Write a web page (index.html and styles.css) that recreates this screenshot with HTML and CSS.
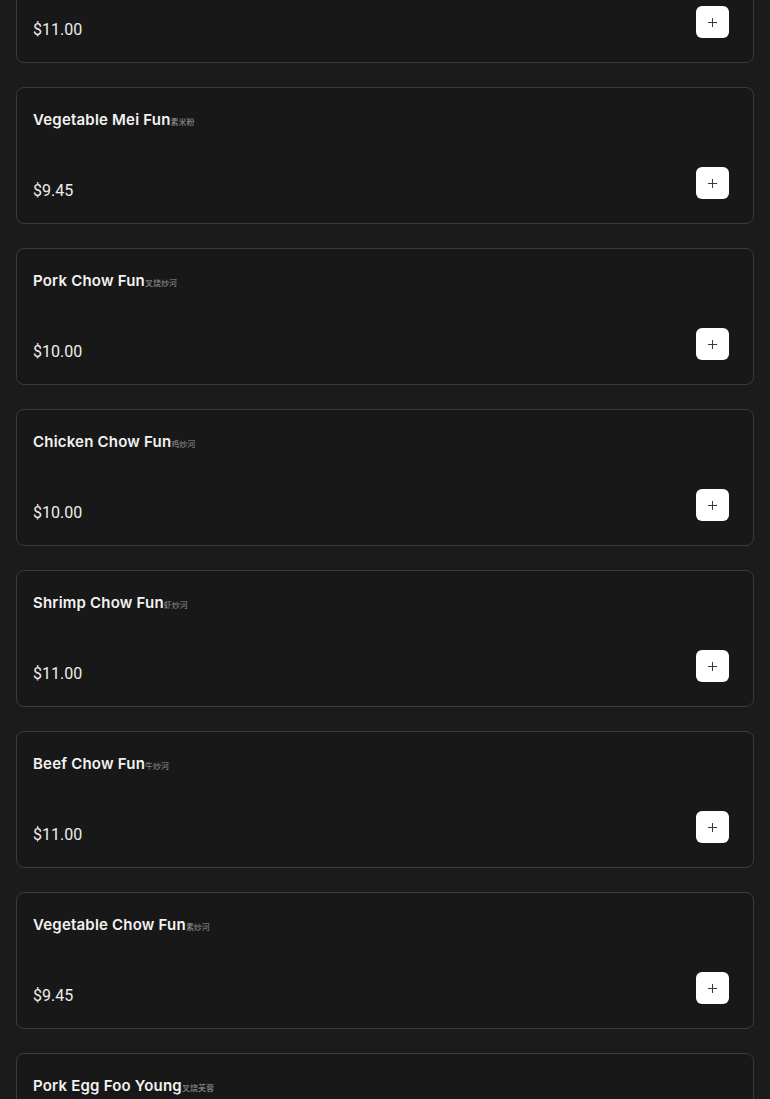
FILE: index.html
```html
<!DOCTYPE html>
<html lang="en">
<head>
  <meta charset="utf-8">
  <meta name="viewport" content="width=device-width, initial-scale=1">
  <title>Menu</title>
  <link rel="stylesheet" href="styles.css">
</head>
<body>
  <div class="menu-list">

    <div class="menu-item">
      <div class="item-name">Shrimp Mei Fun<span class="zh">虾米粉</span></div>
      <div class="item-foot">
        <span class="item-price">$11.00</span>
        <button class="add-btn" aria-label="Add"><svg viewBox="0 0 12 12"><path d="M6 1v10M1 6h10"/></svg></button>
      </div>
    </div>

    <div class="menu-item">
      <div class="item-name">Vegetable Mei Fun<span class="zh">素米粉</span></div>
      <div class="item-foot">
        <span class="item-price">$9.45</span>
        <button class="add-btn" aria-label="Add"><svg viewBox="0 0 12 12"><path d="M6 1v10M1 6h10"/></svg></button>
      </div>
    </div>

    <div class="menu-item">
      <div class="item-name">Pork Chow Fun<span class="zh">叉烧炒河</span></div>
      <div class="item-foot">
        <span class="item-price">$10.00</span>
        <button class="add-btn" aria-label="Add"><svg viewBox="0 0 12 12"><path d="M6 1v10M1 6h10"/></svg></button>
      </div>
    </div>

    <div class="menu-item">
      <div class="item-name">Chicken Chow Fun<span class="zh">鸡炒河</span></div>
      <div class="item-foot">
        <span class="item-price">$10.00</span>
        <button class="add-btn" aria-label="Add"><svg viewBox="0 0 12 12"><path d="M6 1v10M1 6h10"/></svg></button>
      </div>
    </div>

    <div class="menu-item">
      <div class="item-name">Shrimp Chow Fun<span class="zh">虾炒河</span></div>
      <div class="item-foot">
        <span class="item-price">$11.00</span>
        <button class="add-btn" aria-label="Add"><svg viewBox="0 0 12 12"><path d="M6 1v10M1 6h10"/></svg></button>
      </div>
    </div>

    <div class="menu-item">
      <div class="item-name">Beef Chow Fun<span class="zh">牛炒河</span></div>
      <div class="item-foot">
        <span class="item-price">$11.00</span>
        <button class="add-btn" aria-label="Add"><svg viewBox="0 0 12 12"><path d="M6 1v10M1 6h10"/></svg></button>
      </div>
    </div>

    <div class="menu-item">
      <div class="item-name">Vegetable Chow Fun<span class="zh">素炒河</span></div>
      <div class="item-foot">
        <span class="item-price">$9.45</span>
        <button class="add-btn" aria-label="Add"><svg viewBox="0 0 12 12"><path d="M6 1v10M1 6h10"/></svg></button>
      </div>
    </div>

    <div class="menu-item">
      <div class="item-name">Pork Egg Foo Young<span class="zh">叉烧芙蓉</span></div>
      <div class="item-foot">
        <span class="item-price">$11.00</span>
        <button class="add-btn" aria-label="Add"><svg viewBox="0 0 12 12"><path d="M6 1v10M1 6h10"/></svg></button>
      </div>
    </div>

  </div>
</body>
</html>
```

FILE: styles.css
```css
html, body {
  margin: 0;
  padding: 0;
  background-color: #1b1b1b;
  color: #ececec;
  font-family: Roboto, "Liberation Sans", sans-serif;
}

.menu-list {
  display: flex;
  flex-direction: column;
  gap: 24px;
  margin-top: -74px;
  padding: 0 16px 24px;
}

.menu-item {
  box-sizing: border-box;
  min-height: 137px;
  display: flex;
  flex-direction: column;
  justify-content: space-between;
  padding: 20px 24px 20px 16px;
  background-color: #181818;
  border: 1px solid #3b3b3b;
  border-radius: 8px;
}

.item-name {
  font-family: Inter, "Noto Sans CJK SC", sans-serif;
  font-size: 15px;
  font-weight: 600;
  line-height: 24px;
  letter-spacing: 0.2px;
  color: #f2f2f2;
}

.zh {
  font-family: "Noto Sans CJK SC", sans-serif;
  font-size: 8px;
  font-weight: 400;
  letter-spacing: 0;
  color: #9a9a9a;
}

.item-foot {
  display: flex;
  justify-content: space-between;
  align-items: flex-end;
}

.item-price {
  font-size: 16px;
  line-height: 24px;
  color: #ededed;
}

.add-btn {
  width: 33px;
  height: 32px;
  margin-bottom: 4px;
  padding: 0;
  display: flex;
  align-items: center;
  justify-content: center;
  background: #fff;
  border: none;
  border-radius: 6px;
  cursor: pointer;
}

.add-btn svg {
  width: 11px;
  height: 11px;
  fill: none;
  stroke: #3a3a3a;
  stroke-width: 1.1;
}
```
